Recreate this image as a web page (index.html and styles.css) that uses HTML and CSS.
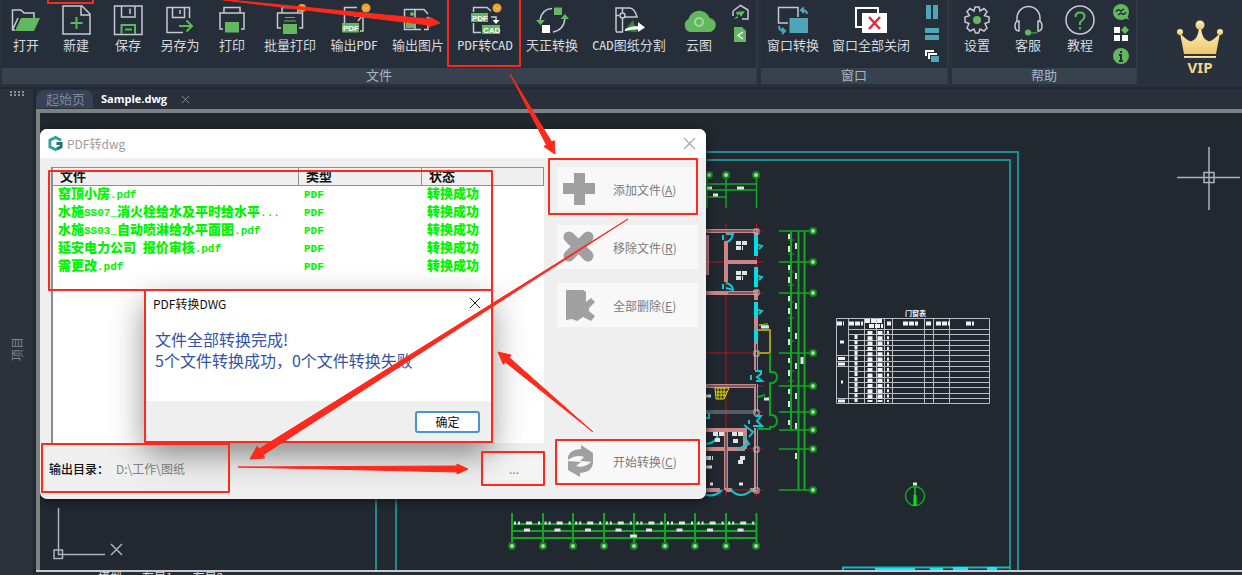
FILE: index.html
```html
<!DOCTYPE html>
<html lang="zh-CN">
<head>
<meta charset="utf-8">
<title>Sample.dwg</title>
<link rel="stylesheet" href="styles.css">
</head>
<body>
<div class="app">
  <header class="ribbon">
    <section class="group">
      <div class="tools tools-file">
        <button class="tool"><svg class="icon" viewBox="0 0 36 32"><path class="ln" d="M7 26H4.500V6H13L16 9H26V14M4.500 26L10 14"/><path class="gf" d="M13 14H32L26 27H7Z"/></svg>打开</button>
        <button class="tool"><svg class="icon" viewBox="0 0 36 32"><path class="ln" d="M5 2H24L32 10V30H5ZM23 2V11H32"/><path class="gl" d="M18.500 13V25M12.500 19H24.500"/></svg>新建</button>
        <button class="tool"><svg class="icon" viewBox="0 0 36 32"><path class="ln" d="M4.500 2H32V30.500H4.500ZM11.500 2V13H25V2M20 4.500V10"/><path class="gl" d="M11.500 30V21H25V30M15 25.500H22"/></svg>保存</button>
        <button class="tool"><svg class="icon" viewBox="0 0 36 32"><path class="ln" d="M21 28.500H5V3.500H27.500V14M10.500 4V13.500H22.500V4M18 6V10"/><path class="gl" d="M17 22H29M24.500 16.500L30 22L24.500 27.500"/></svg>另存为</button>
        <button class="tool"><svg class="icon" viewBox="0 0 36 32"><path class="ln" d="M10 9V3.500H26V9M9 25H6V9H30V25H27"/><path class="gf" d="M11 18H25V28.500H11Z"/></svg>打印</button>
        <button class="tool"><svg class="icon" viewBox="0 0 36 32"><path class="ln" d="M10 9V3.500H26V9M9 24H5.500V9H30.500V24H27"/><path class="gf" d="M11 20H25V30H11Z"/><path class="gl thin" d="M13 13.500H23M12 17H24"/><circle class="of" cx="30" cy="4" r="4"/></svg>批量打印</button>
        <button class="tool"><svg class="icon" viewBox="0 0 36 32"><path class="ln" d="M8.500 19V3.500H21M27 10V27H24M18 12H26L22 17"/><path class="gf" d="M6 19H23V28.500H6Z"/><text class="tag" x="7" y="27">PDF</text><circle class="of" cx="30" cy="4" r="4.500"/><path class="ln thin" d="M28 3L30 5.500L32 3"/></svg><span>输出<small>PDF</small></span></button>
        <button class="tool"><svg class="icon" viewBox="0 0 36 32"><path class="ln" d="M21 25.500H4.500V5.500H24L28 10M15 5V26M24 25.500H28V18"/><path class="gf" d="M6 15H14V24H6Z"/><circle class="gf" cx="12" cy="10" r="2"/><path class="ln" d="M20 17H30M27 13L31 17"/></svg>输出图片</button>
        <button class="tool"><svg class="icon" viewBox="0 0 36 32"><path class="ln" d="M6.500 8V3.500H20L24 7M6.500 19V28.500H14M24 13H29V18"/><path class="wf" d="M25.500 16H32.500L29 20Z"/><path class="gf" d="M4 9H21V18H4ZM15 21H33V30H15Z"/><text class="tag" x="5" y="16.500">PDF</text><text class="tag" x="16" y="28.500">CAD</text><circle class="of" cx="30" cy="4" r="4.500"/><path class="ln thin" d="M28 3L30 5.500L32 3"/></svg><span><small>PDF</small>转<small>CAD</small></span></button>
        <button class="tool"><svg class="icon" viewBox="0 0 36 32"><path class="ln" d="M18 4.500Q8 5 6 16M19 28Q30 26 31 14"/><path class="gf" d="M20 3.500H28V11H20ZM2 16H11L6.500 21ZM26.500 15H35L31 10Z"/><path class="wf" d="M8 21H16V29H8Z"/></svg>天正转换</button>
        <button class="tool"><svg class="icon" viewBox="0 0 36 32"><path class="ln" d="M5 27.500V4H19Q24 5 26 13H14M11.500 4V8.500M11.500 14V28H5M5 11.500H8"/><circle class="ln" cx="11.500" cy="11.500" r="2.500"/><path class="gf dim" d="M13 27L22 16L26 28Z"/><path class="wf" d="M14 25Q20 22 27 22V18L34 23.500L27 28V25.500Q20 25 14 27Z"/></svg><span><small>CAD</small>图纸分割</span></button>
        <button class="tool"><svg class="icon" viewBox="0 0 36 32"><path class="gf" d="M9 28A7 7 0 0 1 7.500 15A11 11 0 0 1 28.500 14A7 7 0 0 1 27 28Z"/><circle cx="18" cy="18" r="4" fill="none" stroke="#9edb94" stroke-width="2"/></svg>云图</button>
        <div class="minis">
          <button class="mini" aria-label="云共享"><svg viewBox="0 0 18 18"><path class="ln" d="M2 7L9.500 1.500L17 6V15H11M2 7V12"/><path class="gf" d="M5 8L14 7L10 13L8 10L3 15L7 14"/></svg></button>
          <button class="mini" aria-label="分享"><svg viewBox="0 0 18 18"><path class="gf" d="M3 1H11L15 5V16H3Z"/><path d="M12 6L7 9.500L12 13" fill="none" stroke="#ffffff" stroke-width="1.500"/></svg></button>
        </div>
      </div>
      <h2 class="caption">文件</h2>
    </section>
    <section class="group">
      <div class="tools tools-window">
        <button class="tool"><svg class="icon" viewBox="0 0 36 32"><path class="ln" d="M13 19H3.500V3.500H23V13"/><path class="tf" d="M14.500 14H33V29H14.500Z"/><path class="tl" d="M32 10Q32 6 26 6M29 3.500L26 6L29 9M4 22Q4 27 9 27M7 24L10 27L7 30"/></svg>窗口转换</button>
        <button class="tool"><svg class="icon" viewBox="0 0 36 32"><path class="ln thick" d="M10 23H3V4H25V9"/><path class="wf" d="M9 9H34V29H9Z"/><path d="M16 13L27 25M27 13L16 25" stroke="#e02b3a" stroke-width="2.500"/></svg>窗口全部关闭</button>
        <div class="minis">
          <button class="mini" aria-label="垂直平铺"><svg viewBox="0 0 18 18"><path class="tf" d="M3 1H8V15H3ZM10 1H15V15H10Z"/></svg></button>
          <button class="mini" aria-label="水平平铺"><svg viewBox="0 0 18 18"><path class="tf" d="M2 2H16V7H2ZM2 9H16V14H2Z"/></svg></button>
          <button class="mini" aria-label="层叠"><svg viewBox="0 0 18 18"><path class="ln thick" d="M3 8V3H11M6 11V6H14"/><path class="tf" d="M8 8H16V14H8Z"/></svg></button>
        </div>
      </div>
      <h2 class="caption">窗口</h2>
    </section>
    <section class="group">
      <div class="tools tools-help">
        <button class="tool"><svg class="icon" viewBox="0 0 36 32"><path class="ln" d="M15 7L16 3H20L21 7L25 4.500L28 7.500L25.500 11.500L30 13V18L26 19.500L28 24L25 27L21 25L19.500 29H16.500L15 25L11 27L8 24L10 19.500L6 18V13L10.500 11.500L8 7.500L11 4.500Z"/><circle class="gf" cx="18" cy="16" r="4"/></svg>设置</button>
        <button class="tool"><svg class="icon" viewBox="0 0 36 32"><path class="ln" d="M7 17V14A11.500 11.500 0 0 1 30 14V17M9 17Q5 17 5 22Q5 27 9 27ZM28 17Q32 17 32 22Q32 27 28 27Z"/><path class="gl thin" d="M18 29H26L29 27"/><circle class="gf" cx="18" cy="28.500" r="3"/></svg>客服</button>
        <button class="tool"><svg class="icon" viewBox="0 0 36 32"><circle class="ln" cx="18" cy="16" r="14"/><path class="gl" d="M13.500 13Q13.500 8.500 18 8.500T22.500 12.500Q22.500 15 20 16.500T18 20V21M18 23V25.500"/></svg>教程</button>
        <div class="minis">
          <button class="mini" aria-label="检查更新"><svg viewBox="0 0 18 18"><circle class="gf" cx="9" cy="8" r="8"/><path class="gf" d="M11 13L15 11L17 16Z"/><path d="M4 8Q6 4 9 7L12 5M14 8Q12 12 9 9L6 11" fill="none" stroke="#272e39" stroke-width="1.500"/></svg></button>
          <button class="mini" aria-label="更多应用"><svg viewBox="0 0 18 18"><path class="wf" d="M2 1H8V7H2ZM2 9H8V15H2ZM10 9H16V15H10Z"/><path class="gf" d="M13 0L17 4L13 8L9 4Z"/></svg></button>
          <button class="mini" aria-label="关于"><svg viewBox="0 0 18 18"><circle class="gf" cx="9" cy="8" r="8"/><path d="M9 3V5M7 7H9V13M7 13H11" fill="none" stroke="#272e39" stroke-width="2"/></svg></button>
        </div>
      </div>
      <h2 class="caption">帮助</h2>
    </section>
    <a class="vip" href="#"><svg viewBox="0 0 46 40"><defs><linearGradient id="gold" x2="0" y2="1"><stop offset="0" stop-color="#fff1bd"/><stop offset="1" stop-color="#ecc668"/></linearGradient></defs><g fill="url(#gold)"><path d="M3 13Q12 23 15 21Q21 19 22 8H24Q25 19 31 21Q34 23 43 13L39 34H7Z"/><circle cx="23" cy="5" r="4.500"/><circle cx="3" cy="12" r="3"/><circle cx="43" cy="12" r="3"/><path d="M7 36H39V38H7Z"/></g></svg><span>VIP</span></a>
  </header>

  <div class="body">
    <aside class="side"><span class="grip"></span><span class="side-label">项目</span></aside>
    <div class="doc">
      <nav class="tabs">
        <button class="tab">起始页</button>
        <button class="tab tab-active">Sample.dwg</button>
        <button class="tab-close" aria-label="关闭标签"><svg viewBox="0 0 10 10"><path d="M1 1L9 9M9 1L1 9"/></svg></button>
      </nav>
      <main class="stage">
        <svg class="drawing" viewBox="40 113 1202 458" preserveAspectRatio="xMinYMin slice" fill="none">
          <g stroke="#1f8c8f" stroke-width="2"><path d="M376 571V152H1018V571M396 571V160H1010V571"/></g>
          <path d="M843 571V567.500H1010" stroke="#10bcc4" stroke-width="2"/>
          <path d="M875 570H915M930 570H943M953 569H968M987 569H997" stroke="#00f0f8" stroke-width="4"/>
          <g stroke="#c01018">
            <path d="M706 231H763M726 224V497M756.500 224V497M706 262H763M706 293H763M706 353H763M750 386H763M750 412H763M750 449H763M706 490H763"/>
          </g>
          <g stroke="#c98588" stroke-width="4">
            <path d="M706 231H758M726 241V282M728 262H757M706 293H757M706 386H757M706 430H745V449M726 430V490M706 449H745M706 490H720M726 490H732M750 490H758M756 230V252M756 268V275M756 290V300M756 318V330M756 342V370M756 384V412M756 428V492M707 235V275"/>
          </g>
          <path d="M706 412H756" stroke="#858b8f" stroke-width="3"/>
          <g stroke="#2b2e36"><path d="M708 231H756M728 293H755M708 386H755M708 412H755M726 432V488M756.500 344V490"/></g>
          <g stroke="#b8b8b8"><path d="M754 229H759V234H754ZM754 290H759V295H754ZM754 351H759V356H754ZM754 410H759V415H754ZM754 447H759V452H754ZM754 488H759V493H754Z"/></g>
          <g stroke="#00dfe8" stroke-width="4"><path d="M756 236V256M756 267V287M756 302V318M756 330V342"/></g>
          <g stroke="#12c5ce" stroke-width="2">
            <path d="M758 245L762 246L759 249M758 276L762 277L759 280M758 310L762 311L759 314"/>
            <path d="M723 235V240M726 234H733Q732 240 727 242M723 284V289M726 283Q733 285 733 290L726 288M751 375V380M755 371H761V374L757 377L762 381H756M749 420V424M755 416H761L757 421L762 426H753M706 418H709V413M738 449L749 444L744 436M744 425L753 432L749 437M706 444Q715 443 718 436M731 490Q740 500 752 490M706 495Q716 497 722 490"/>
          </g>
          <path d="M715 388H729L724 399H716ZM718 388V399M721 388V399M724 388V398M716 392H727M716 395H726" stroke="#e6dc10"/>
          <path d="M758 330H770V353H758M759 325H768" stroke="#a89a18" stroke-width="2"/>
          <path d="M770 353V372H773Q777 373 777 377T773 383H770V415H773Q777 417 777 421T773 427H770V429H757M758 397L765 395M764 324H768" stroke="#0aa51a" stroke-width="2"/>
          <g stroke="#10a81e">
            <path d="M707 175V208M726 175V208M756.500 175V208M706 184H757M706 190H757M706 197H726" stroke-width="1.500"/>
            <path d="M779 231H813M779 262H813M779 293H813M779 353H813M779 386H813M779 412H813M779 430H813M779 449H813M779 490H813" stroke-width="1.500"/>
            <path d="M791 231V430M798.500 231V490M804.500 231V490" stroke-width="2"/>
            <path d="M788 240H794M788 254H794M788 272H794M788 285H794M788 302H794M788 318H794M788 341H794M788 371H794M788 381H794"/>
            <path d="M512 513V546M543 513V546M573 513V546M604 513V546M634 513V546M665 513V546M695 513V546M726 513V546M756.500 513V546M512 524H757M512 531H757M512 538H757" stroke-width="2"/>
            <circle cx="915" cy="496" r="9.500" stroke-width="1.500"/><path d="M915 486V505" stroke-width="2"/>
          </g>
          <path d="M915 495V506" stroke="#00e81c" stroke-width="3"/>
          <g fill="#9be39b" stroke="#15841e" stroke-width="2">
            <circle cx="709" cy="175" r="3"/><circle cx="726" cy="175" r="3"/><circle cx="756" cy="175" r="3"/>
            <circle cx="813" cy="231" r="3"/><circle cx="813" cy="262" r="3"/><circle cx="813" cy="293" r="3"/><circle cx="813" cy="353" r="3"/><circle cx="813" cy="386" r="3"/><circle cx="813" cy="412" r="3"/><circle cx="813" cy="430" r="3"/><circle cx="813" cy="449" r="3"/><circle cx="813" cy="490" r="3"/>
            <circle cx="512" cy="546" r="3"/><circle cx="543" cy="546" r="3"/><circle cx="573" cy="546" r="3"/><circle cx="604" cy="546" r="3"/><circle cx="634" cy="546" r="3"/><circle cx="665" cy="546" r="3"/><circle cx="695" cy="546" r="3"/><circle cx="726" cy="546" r="3"/><circle cx="756" cy="546" r="3"/>
          </g>
          <g stroke="#dfe3e4" stroke-width="3">
            <path d="M514 523H756" stroke-dasharray="2 2 2 6 6 6 2 4.600"/>
            <path d="M524 530H756" stroke-dasharray="6 24.500"/>
            <path d="M630 536H637M707 188H712M737 188H744M713 195H718M761 327H769M764 399H769M706 396H711M706 467H712M739 484H743M710 484H713M913 484H917"/>
            <path d="M736 243H748M736 248H743M736 273H748M736 278H743M713 434H724M715 440H720M732 434H743M733 441H739M706 458H713M740 458H746M738 462H744" stroke-width="4" stroke-dasharray="5 1"/>
            <path d="M789 234V430" stroke-width="2" stroke-dasharray="5 7 6 13"/>
            <path d="M796 243V475" stroke-width="2" stroke-dasharray="6 24"/>
            <path d="M802 357V364"/>
          </g>
          <g stroke="#b9bdc1">
            <path d="M836.500 318.500H989.500V403.500H836.500ZM848.500 318V403M864.500 318V403M876.500 318V403M884.500 318V403M892.500 318V403M924.500 318V403M933.500 318V403M949.500 318V403M848 329.500H990M848 334.500H990M848 340.500H990M848 345.500H990M848 350.500H990M836 355.500H990M836 361.500H990M836 366.500H990M848 371.500H990M848 377.500H990M848 382.500H990M848 387.500H990M848 393.500H990M836 398.500H990"/>
          </g>
          <g stroke="#f2f2f2" stroke-width="4">
            <path d="M837 323.500H844M849 323.500H863M865 321H883M869 326H883M887 323.500H891M903 323.500H918M926 323.500H932M936 323.500H950M966 323.500H974" stroke-dasharray="5 1"/>
            <path d="M856 335V402" stroke-width="3" stroke-dasharray="4 1.300"/>
            <path d="M870 331V402M880 331V402" stroke-width="5" stroke-dasharray="4 1.300"/>
            <path d="M888 331V402" stroke-width="2" stroke-dasharray="3 2.300"/>
            <path d="M840 342H844M838 358.500H845M838 364H845M841 382H843M838 401H845" stroke-width="3"/>
          </g>
          <text x="905" y="316" class="table-title">门窗表</text>
          <g stroke="#aeb3ba">
            <path d="M1177 177.500H1240M1209 147V210M1204 172.500H1214V182.500H1204Z" stroke-width="1.500"/>
            <path d="M58.500 508V554.500H105M54 550H62.500V558.500H54ZM111 544L122 555M122 544L111 555" stroke-width="1.500"/>
          </g>
        </svg>

        <section class="dialog" aria-label="PDF转dwg">
          <header class="dialog-title">
            <svg class="logo" viewBox="0 0 16 16" fill="none" stroke-width="3"><path d="M14 4.500L8 1.500L2 4.500V11.500L8 14.500L11 13" stroke="#2aa39a"/><path d="M9 8H14V11.500L10 13.500" stroke="#246f78"/></svg>
            <span>PDF转dwg</span>
            <button class="close" aria-label="关闭"><svg viewBox="0 0 10 10"><path d="M0 0L10 10M10 0L0 10"/></svg></button>
          </header>
          <div class="dialog-main">
            <div class="list">
              <table>
                <thead><tr><th class="c-file">文件</th><th class="c-type">类型</th><th>状态</th></tr></thead>
                <tbody>
                  <tr><td><b>窑顶小房</b>.pdf</td><td>PDF</td><td><b>转换成功</b></td></tr>
                  <tr><td><b>水施</b>SS07_<b>消火栓给水及平时给水平</b>...</td><td>PDF</td><td><b>转换成功</b></td></tr>
                  <tr><td><b>水施</b>SS03_<b>自动喷淋给水平面图</b>.pdf</td><td>PDF</td><td><b>转换成功</b></td></tr>
                  <tr><td><b>延安电力公司</b> <b>报价审核</b>.pdf</td><td>PDF</td><td><b>转换成功</b></td></tr>
                  <tr><td><b>需更改</b>.pdf</td><td>PDF</td><td><b>转换成功</b></td></tr>
                </tbody>
              </table>
            </div>
            <div class="actions">
              <button class="action"><svg viewBox="0 0 32 32"><path d="M11 0H22V10H32V21H22V32H11V21H0V10H11Z"/></svg><span>添加文件(<u>A</u>)</span></button>
              <button class="action"><svg viewBox="0 0 32 32"><path d="M6 6L25 25M25 6L6 25" stroke="#a0a0a0" stroke-width="11" stroke-linecap="round"/></svg><span>移除文件(<u>R</u>)</span></button>
              <button class="action"><svg viewBox="0 0 32 32"><path d="M3 1H20L23 3V13L28 9L32 13L26 19V22L32 27L28 32L20 28L14 32L9 30L3 31Z"/></svg><span>全部删除(<u>E</u>)</span></button>
              <button class="action action-start"><svg viewBox="0 0 32 32"><path d="M5 15Q4 5 18 4V0L30 8V17L17 16L21 12Q13 9 5 15ZM30 15Q31 27 17 28V32L5 25V16L18 17L13 21Q22 24 30 15Z"/></svg><span>开始转换(<u>C</u>)</span></button>
            </div>
          </div>
          <footer class="output">
            <label for="out">输出目录：</label>
            <input id="out" type="text" value="D:\工作\图纸">
            <button class="browse">...</button>
          </footer>

          <section class="message" aria-label="PDF转换DWG">
            <header class="message-title"><span>PDF转换DWG</span><button class="close dark" aria-label="关闭消息"><svg viewBox="0 0 10 10"><path d="M0 0L10 10M10 0L0 10"/></svg></button></header>
            <p class="message-text">文件全部转换完成!<br>5个文件转换成功，0个文件转换失败</p>
            <footer class="message-foot"><button class="ok">确定</button></footer>
          </section>
        </section>
      </main>
      <footer class="layouts"><span>模型</span><span>布局1</span><span>布局2</span></footer>
    </div>
  </div>

  <svg class="marks" viewBox="0 0 1242 575" preserveAspectRatio="xMinYMin slice" aria-hidden="true">
    <g fill="none" stroke="#fb2a1d" stroke-width="2" stroke-linejoin="round">
      <path d="M48 -5H93V3H48ZM448 -5H520V66H448ZM49 171H492V290H49ZM145 290H492V442H145ZM42 444H229V492H42ZM482 452H544V485H482ZM549 159H697V214H549ZM556 440H699V484H556Z"/>
    </g>
    <g fill="#fb2a1d" stroke="#fb2a1d" stroke-width="1" stroke-linejoin="round">
      <path d="M208 -2L429.400 19.200L429.600 17L440 23L428.400 27L428.600 25Z"/>
      <path d="M510 74L551.700 142L554.300 140.600L555 154L543.900 146.400L546.500 145Z"/>
      <path d="M628 219L259.100 449L257.200 446.100L250 459L264.800 457.900L262.900 455Z"/>
      <path d="M238 467L457 466L457 464L468 469L457 474L457 472Z"/>
      <path d="M593 432L509.100 357.400L511.100 355.100L498 352L503.300 364.300L505.300 362Z"/>
    </g>
  </svg>
</div>
</body>
</html>
```
FILE: styles.css
```css
* { box-sizing: border-box; }

body {
  margin: 0;
  background: #2b333f;
  color: #d5d9de;
  font-family: "Noto Sans CJK SC", "Noto Sans", sans-serif;
  font-size: 13px;
}

button {
  margin: 0;
  padding: 0;
  border: 0;
  background: none;
  color: inherit;
  font: inherit;
}

svg { display: block; }

.app {
  position: relative;
  display: flex;
  flex-direction: column;
  height: 100vh;
  overflow: hidden;
}

/* Ribbon */
.ribbon {
  display: flex;
  gap: 4px;
  padding: 0 0 3px 2px;
  background: #29313c;
  border-bottom: 2px solid #222933;
}

.group { background: #262e39; border-right: 1px solid #333c48; }

.tools { display: grid; height: 68px; padding-top: 4px; }
.tools-file { grid-template-columns: 48px repeat(4, 52px) repeat(3, 64px) 70px 64px 90px 50px 32px; }
.tools-window { grid-template-columns: 64px 92px 30px; }
.tools-help { grid-template-columns: 50px 52px 52px 30px; }

.tool {
  display: flex;
  flex-direction: column;
  align-items: center;
  line-height: 17px;
  white-space: nowrap;
}
.tool small { font-size: 11px; font-weight: 500; }

.icon { width: 36px; height: 32px; overflow: visible; }

.ln { fill: none; stroke: #c5cad1; stroke-width: 1.5px; }
.gl { fill: none; stroke: #5cb85a; stroke-width: 2px; }
.tl { fill: none; stroke: #4fa6b8; stroke-width: 2px; }
.thin { stroke-width: 1px; }
.thick { stroke: #ffffff; stroke-width: 2px; }
.gf { fill: #62b75f; }
.dim { fill: #3f8145; }
.tf { fill: #4fa6b8; }
.wf { fill: #ffffff; }
.of { fill: #f0a030; }
.tag { fill: #ffffff; font: bold 8px "Liberation Sans", sans-serif; }

.minis { display: flex; flex-direction: column; align-items: center; gap: 4px; }
.mini { width: 18px; height: 18px; }
.mini svg { width: 18px; height: 18px; }

.caption {
  margin: 0;
  height: 16px;
  background: #38424f;
  color: #a9b6c4;
  font-size: 13px;
  font-weight: 400;
  line-height: 14px;
  text-align: center;
}

.vip {
  display: flex;
  flex-direction: column;
  align-items: center;
  margin-left: 36px;
  padding-top: 20px;
  color: #f3d88c;
  font: bold 15px/14px "Noto Sans", sans-serif;
  text-decoration: none;
}
.vip svg { width: 46px; height: 40px; }

/* Document area */
.body { display: flex; flex: 1; min-height: 0; }

.side {
  display: flex;
  flex-direction: column;
  align-items: center;
  width: 36px;
  padding-top: 2px;
  background: #2b323b;
  border-right: 3px solid #22282f;
  color: #7d858f;
}
.grip { width: 14px; height: 5px; border: dotted #8a929c; border-width: 2px 0; }
.side-label {
  margin: auto 0;
  padding-top: 28px;
  writing-mode: sideways-lr;
  font-size: 12px;
  line-height: 16px;
}

.doc { display: flex; flex: 1; flex-direction: column; min-width: 0; }

.tabs { display: flex; align-items: center; height: 20px; background: #29303c; }
.tab {
  height: 18px;
  padding: 0 8px 0 10px;
  border-radius: 10px 8px 0 0;
  background: #364155;
  color: #7e8794;
  line-height: 18px;
}
.tab-active {
  padding-left: 8px;
  background: none;
  color: #ffffff;
  font: bold 11px/18px "Open Sans", sans-serif;
}
.tab-close { margin-left: 6px; }
.tab-close svg { width: 9px; height: 9px; fill: none; stroke: #8b939d; }

.stage {
  position: relative;
  flex: 1;
  min-height: 0;
  overflow: hidden;
  border: solid #7d8383;
  border-width: 4px 0 0 4px;
  background: #212830;
}
.drawing { position: absolute; inset: 0; width: 100%; height: 100%; }
.table-title { fill: #f2f2f2; font-size: 7px; font-weight: 700; }

.layouts {
  display: flex;
  gap: 20px;
  height: 5px;
  padding-left: 62px;
  overflow: hidden;
  border-top: 2px solid #c9ccd4;
  background: #272d36;
  font-size: 12px;
  line-height: 10px;
}

/* Converter window */
.dialog {
  position: absolute;
  top: 16px;
  left: 0;
  display: flex;
  flex-direction: column;
  width: 666px;
  height: 370px;
  border-radius: 7px;
  background: #efefef;
  color: #111111;
  box-shadow: 0 2px 8px #10141a;
}

.dialog-title {
  display: flex;
  align-items: center;
  gap: 4px;
  height: 29px;
  padding: 0 11px 0 8px;
  border-radius: 7px 7px 0 0;
  background: #ffffff;
  color: #9c9c9c;
  font-size: 12px;
}
.logo { width: 15px; height: 15px; }
.close { margin-left: auto; }
.close svg { width: 11px; height: 11px; overflow: visible; fill: none; stroke: #a5a5a5; }
.dark svg { width: 10px; height: 10px; stroke: #222222; }

.dialog-main { display: flex; flex: 1; gap: 13px; padding: 9px 8px 0 11px; }

.list {
  flex: 1;
  border-left: 2px solid #8c8c8c;
  background: #ffffff;
}
.list table { width: 100%; border-spacing: 0; table-layout: fixed; }
.list th {
  height: 19px;
  padding: 0 7px 2px;
  border: solid #909090;
  border-width: 1px 1px 1px 0;
  background: #efefef;
  font-size: 13px;
  font-weight: 700;
  line-height: 15px;
  text-align: left;
}
.c-file { width: 246px; }
.c-type { width: 123px; }
.list td {
  height: 18px;
  padding: 0 5px;
  color: #00f400;
  font: bold 11px/18px "Liberation Mono", "Noto Sans CJK SC", monospace;
  white-space: nowrap;
}
.list b { font-size: 13px; line-height: 16px; }

.actions { display: flex; flex-direction: column; gap: 14px; width: 141px; }
.action {
  display: flex;
  align-items: center;
  gap: 18px;
  height: 44px;
  padding-left: 6px;
  background: #f8f8f8;
  color: #7b7b7b;
  font-size: 12px;
}
.action svg { width: 32px; height: 32px; fill: #a0a0a0; }
.action-start { margin-top: auto; margin-bottom: -40px; }

.output {
  display: flex;
  align-items: center;
  height: 56px;
  padding: 0 162px 6px 9px;
  font-size: 12px;
}
.output label { width: 64px; font-weight: 500; }
.output input {
  flex: 1;
  min-width: 0;
  height: 22px;
  padding: 0 3px;
  border: 0;
  background: rgba(255, 255, 255, 0.15);
  color: #858585;
  font: 12px "Noto Sans CJK SC", sans-serif;
}
.browse {
  width: 60px;
  height: 23px;
  margin-left: 8px;
  background: #f4f4f4;
  color: #888888;
}

.message {
  position: absolute;
  top: 162px;
  left: 105px;
  display: flex;
  flex-direction: column;
  width: 346px;
  height: 151px;
  background: #ffffff;
  box-shadow: 0 12px 32px rgba(0, 0, 0, 0.45);
}
.message-title {
  display: flex;
  align-items: center;
  height: 24px;
  padding: 0 11px 0 8px;
  font-size: 12px;
}
.message-text {
  flex: 1;
  margin: 0;
  padding: 14px 10px 0;
  color: #3353a4;
  font-size: 16px;
  line-height: 21px;
}
.message-foot {
  display: flex;
  justify-content: flex-end;
  height: 41px;
  padding: 10px 11px;
  background: #efefef;
}
.ok {
  width: 65px;
  height: 22px;
  border: 2px solid #4b94cf;
  border-radius: 3px;
  background: #fdfdfd;
  font-size: 12px;
  line-height: 18px;
}

.marks {
  position: absolute;
  inset: 0;
  width: 100%;
  height: 100%;
  pointer-events: none;
}
```
